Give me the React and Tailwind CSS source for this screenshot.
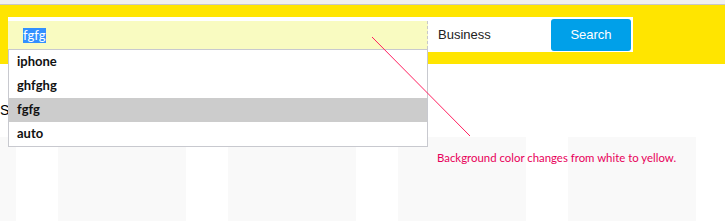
import React from 'react';

const suggestions = ['iphone', 'ghfghg', 'fgfg', 'auto'];

const App = () => {
  return (
    <div className="relative w-[725px] h-[221px] overflow-hidden bg-white font-['Lato',sans-serif]">
      {/* browser chrome strip */}
      <div className="h-[5px] bg-[#f0f0f0] border-b border-[#c8c8c8]" />

      {/* yellow header with search */}
      <div className="h-[59px] bg-[#ffe500] pt-[12px] pl-[8px]">
        <div className="flex w-[625px] h-[35px] bg-white">
          <div className="mt-[4px] h-[28px] w-[420px] bg-[#f9fbc1] border-r border-dashed border-[#c8c8c8] pl-[15px] flex items-center">
            <span className="bg-[#3390ff] text-white text-[13px] leading-[15px]">fgfg</span>
          </div>
          <div className="w-[123px] flex items-center pl-[10px] text-[13px] text-[#222] font-['Liberation_Sans',sans-serif]">
            Business
          </div>
          <button className="mt-[2px] h-[32px] w-[80px] rounded-[3px] bg-[#00a0e9] text-white text-[13px] font-['Liberation_Sans',sans-serif]">
            Search
          </button>
        </div>
      </div>

      {/* page body behind the dropdown */}
      <div className="pt-[38px] text-[14px] text-black font-['Liberation_Sans',sans-serif] leading-[16px]">
        S
      </div>
      <div className="mt-[19px] flex gap-[42px] ml-[-112px]">
        <div className="w-[128px] h-[90px] bg-[#f9f9f9]" />
        <div className="w-[128px] h-[90px] bg-[#f9f9f9]" />
        <div className="w-[128px] h-[90px] bg-[#f9f9f9]" />
        <div className="w-[128px] h-[90px] bg-[#f9f9f9]" />
        <div className="w-[128px] h-[90px] bg-[#f9f9f9]" />
      </div>

      {/* autocomplete dropdown */}
      <ul className="absolute left-[8px] top-[49px] w-[420px] bg-white border border-[#c8c9cf]">
        {suggestions.map((s) => (
          <li
            key={s}
            className={`h-[24px] flex items-center pl-[8px] text-[13px] font-bold text-[#111] ${s === 'fgfg' ? 'bg-[#cccccc]' : ''}`}
          >
            {s}
          </li>
        ))}
      </ul>

      {/* annotation */}
      <svg className="absolute left-0 top-0 pointer-events-none" width="725" height="221">
        <line x1="372" y1="37" x2="470" y2="136" stroke="#ff2060" strokeWidth="1" />
      </svg>
      <div className="absolute left-[437px] top-[150px] text-[11.4px] leading-[16px] text-[#e8005a]">
        Background color changes from white to yellow.
      </div>
    </div>
  );
};

export default App;
